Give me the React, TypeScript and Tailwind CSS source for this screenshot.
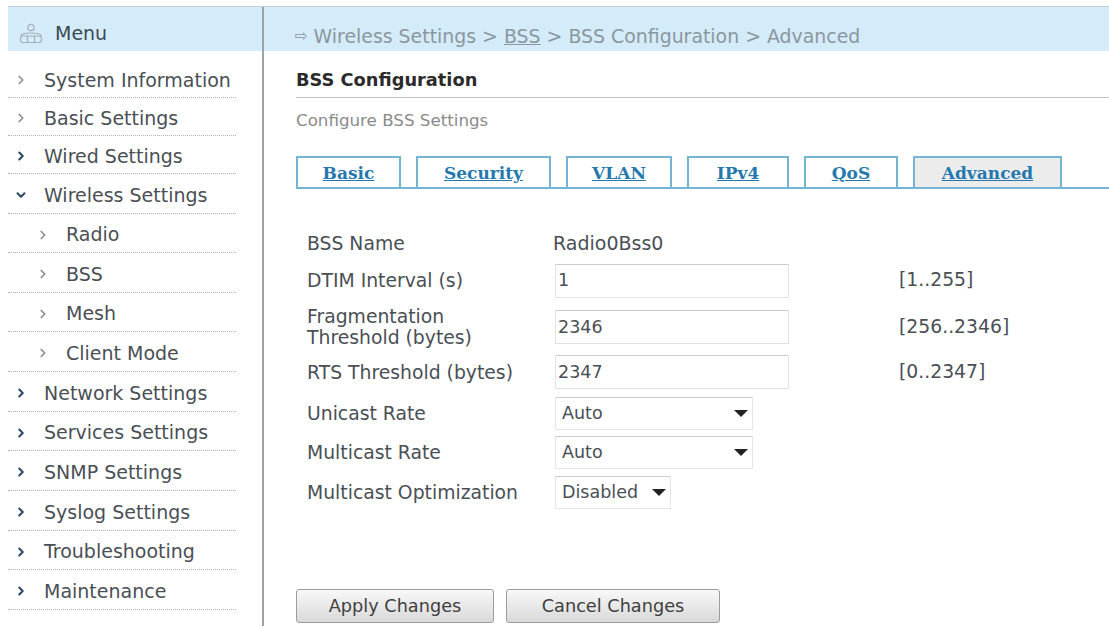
import { ChevronDown, ChevronRight } from 'lucide-react';

const menu = [
  { label: 'System Information', h: 'h-[38px]', dark: false },
  { label: 'Basic Settings', h: 'h-[38px]', dark: false },
  { label: 'Wired Settings', h: 'h-[38px]', dark: true },
  { label: 'Wireless Settings', h: 'h-[40px]', dark: true, open: true },
  { label: 'Radio', h: 'h-[39px]', sub: true },
  { label: 'BSS', h: 'h-[40px]', sub: true },
  { label: 'Mesh', h: 'h-[39px]', sub: true },
  { label: 'Client Mode', h: 'h-[40px]', sub: true },
  { label: 'Network Settings', h: 'h-[40px]', dark: true },
  { label: 'Services Settings', h: 'h-[39px]', dark: true },
  { label: 'SNMP Settings', h: 'h-[40px]', dark: true },
  { label: 'Syslog Settings', h: 'h-[40px]', dark: true },
  { label: 'Troubleshooting', h: 'h-[39px]', dark: true },
  { label: 'Maintenance', h: 'h-[40px]', dark: true },
];

const tabs = [
  { label: 'Basic', w: 'w-[105px]' },
  { label: 'Security', w: 'w-[135px]' },
  { label: 'VLAN', w: 'w-[106px]' },
  { label: 'IPv4', w: 'w-[102px]' },
  { label: 'QoS', w: 'w-[94px]' },
  { label: 'Advanced', w: 'w-[149px]', active: true },
];

function TextField({ value }: { value: string }) {
  return (
    <div className="flex h-[34px] w-[234px] items-center border border-[#e2e2e2] border-t-[#cccccc] bg-white pl-[2px] text-[17.5px]">
      {value}
    </div>
  );
}

function Select({ value, narrow }: { value: string; narrow?: boolean }) {
  return (
    <div className={`flex h-[33px] items-center justify-between border border-[#e6e6e6] border-t-[#cccccc] bg-white pl-[6px] pr-[4px] text-[17.5px] ${narrow ? 'w-[116px]' : 'w-[198px]'}`}>
      <span>{value}</span>
      <span className="h-0 w-0 border-x-[7px] border-t-[7px] border-x-transparent border-t-[#222]" />
    </div>
  );
}

function FormRow({ label, h, children, range }: { label: React.ReactNode; h: string; children: React.ReactNode; range?: string }) {
  return (
    <div className={`flex items-center ${h}`}>
      <div className="w-[247px] shrink-0 whitespace-nowrap text-[18.8px] leading-[21px]">{label}</div>
      <div className="w-[345px] shrink-0">{children}</div>
      {range && <div className="text-[18.8px]">{range}</div>}
    </div>
  );
}

export default function App() {
  return (
    <div className="h-[626px] w-[1109px] overflow-hidden bg-white pt-[6px] pl-[8px] font-['DejaVu_Sans',sans-serif] text-[19px] text-[#4a4f55]">
      <div className="flex h-[620px] border-t border-[#c6cbce]">
        {/* Sidebar */}
        <aside className="w-[256px] shrink-0 border-r-2 border-[#9aa3a8]">
          <div className="flex h-[44px] items-center bg-[#d4ebf9] pl-[11px] pt-[8px] text-[#3c4a52]">
            <svg width="24" height="21" viewBox="0 0 24 21" fill="none" stroke="#a3b0b6" strokeWidth="1.2">
              <circle cx="12" cy="4.5" r="3.2" />
              <path d="M1.5 13c2-4 19-4 21 0" />
              <rect x="1.5" y="13" width="21" height="6.5" rx="2.5" />
              <path d="M8.5 13v6.5M15.5 13v6.5" />
            </svg>
            <span className="ml-[12px]">Menu</span>
          </div>
          <nav className="pt-[9px]">
            {menu.map((item) => (
              <div key={item.label} className={`flex items-center ${item.h} mr-[26px] border-b border-dotted border-[#aeb2b4] pt-[3px] ${item.sub ? 'pl-[28px]' : 'pl-[6px]'}`}>
                <span className="flex w-[30px] shrink-0">
                  {item.open ? (
                    <ChevronDown size={14} strokeWidth={3.5} className="text-[#2c4a63]" />
                  ) : (
                    <ChevronRight size={14} strokeWidth={item.dark ? 3.5 : 3} className={item.dark ? 'text-[#2c4a63]' : 'text-[#8a8f92]'} />
                  )}
                </span>
                <span className="whitespace-nowrap">{item.label}</span>
              </div>
            ))}
          </nav>
        </aside>

        {/* Main */}
        <main className="min-w-0 flex-1">
          <div className="flex h-[44px] items-center whitespace-nowrap bg-[#d4ebf9] pl-[31px] pt-[14px] text-[18.9px] text-[#8b979e]">
            <span className="mr-[6px] text-[15px]">⇨</span>
            <span>Wireless Settings &gt; <span className="underline">BSS</span> &gt; BSS Configuration &gt; Advanced</span>
          </div>
          <div className="pl-[32px]">
            <h1 className="flex h-[47px] items-end border-b border-[#c6c6c6] pb-[3px] text-[17.8px] font-bold text-[#2b2b2b]">BSS Configuration</h1>
            <p className="mt-[13px] text-[16.7px] leading-[18px] text-[#8a8a8a]">Configure BSS Settings</p>
            <div className="mt-[27px] flex h-[33px] gap-[15px] border-b-2 border-[#74b4d4]">
              {tabs.map((t) => (
                <div key={t.label} className={`flex ${t.w} shrink-0 items-center justify-center border-2 border-b-0 border-[#74b4d4] pt-[2px] font-['DejaVu_Serif',serif] text-[17px] font-bold text-[#2478ad] underline ${t.active ? 'bg-[#ececec]' : 'bg-white'}`}>
                  {t.label}
                </div>
              ))}
            </div>
            <div className="mt-[37px] pl-[11px]">
              <FormRow label="BSS Name" h="h-[35px]"><span className="-ml-[1px]">Radio0Bss0</span></FormRow>
              <FormRow label="DTIM Interval (s)" h="h-[39px]" range="[1..255]"><div className="ml-[1px]"><TextField value="1" /></div></FormRow>
              <FormRow label={<>Fragmentation<br />Threshold (bytes)</>} h="h-[54px]" range="[256..2346]"><div className="ml-[1px]"><TextField value="2346" /></div></FormRow>
              <FormRow label="RTS Threshold (bytes)" h="h-[36px]" range="[0..2347]"><div className="ml-[1px]"><TextField value="2347" /></div></FormRow>
              <div className="h-[3px]" />
              <FormRow label="Unicast Rate" h="h-[40px]"><div className="ml-[1px]"><Select value="Auto" /></div></FormRow>
              <FormRow label="Multicast Rate" h="h-[39px]"><div className="ml-[1px]"><Select value="Auto" /></div></FormRow>
              <FormRow label="Multicast Optimization" h="h-[40px]"><div className="ml-[1px]"><Select value="Disabled" narrow /></div></FormRow>
            </div>
            <div className="mt-[77px] flex gap-[12px] text-[17.7px]">
              <button className="h-[34px] w-[198px] rounded-[3px] border border-[#9c9c9c] bg-gradient-to-b from-[#f8f8f8] to-[#d9d9d9] text-[#3f3f3f]">Apply Changes</button>
              <button className="h-[34px] w-[214px] rounded-[3px] border border-[#9c9c9c] bg-gradient-to-b from-[#f8f8f8] to-[#d9d9d9] text-[#3f3f3f]">Cancel Changes</button>
            </div>
          </div>
        </main>
      </div>
    </div>
  );
}
